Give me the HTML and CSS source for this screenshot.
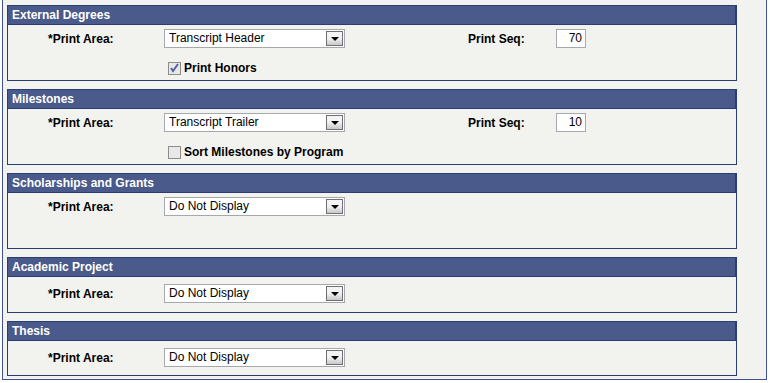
FILE: index.html
```html
<!DOCTYPE html>
<html>
<head>
<meta charset="utf-8">
<link rel="stylesheet" href="styles.css">
</head>
<body>
<div class="page">
  <div class="sec">
    <div class="hdr">External Degrees</div>
    <div class="body b-tall">
      <div class="row">
        <span class="lbl">*Print Area:</span>
        <span class="sel"><span class="sel-text">Transcript Header</span><span class="btn"><span class="tri"></span></span></span>
        <span class="lbl seq-lbl">Print Seq:</span>
        <span class="num">70</span>
      </div>
      <div class="row chk-row">
        <span class="chk checked"><svg width="11" height="11" viewBox="0 0 11 11"><path d="M2 5 L4 8 L9 1" fill="none" stroke="#4f66a6" stroke-width="2"/></svg></span>
        <span class="chk-lbl">Print Honors</span>
      </div>
    </div>
  </div>
  <div class="sec">
    <div class="hdr">Milestones</div>
    <div class="body b-tall">
      <div class="row">
        <span class="lbl">*Print Area:</span>
        <span class="sel"><span class="sel-text">Transcript Trailer</span><span class="btn"><span class="tri"></span></span></span>
        <span class="lbl seq-lbl">Print Seq:</span>
        <span class="num">10</span>
      </div>
      <div class="row chk-row">
        <span class="chk"></span>
        <span class="chk-lbl">Sort Milestones by Program</span>
      </div>
    </div>
  </div>
  <div class="sec">
    <div class="hdr">Scholarships and Grants</div>
    <div class="body b-tall">
      <div class="row">
        <span class="lbl">*Print Area:</span>
        <span class="sel"><span class="sel-text">Do Not Display</span><span class="btn"><span class="tri"></span></span></span>
      </div>
    </div>
  </div>
  <div class="sec">
    <div class="hdr">Academic Project</div>
    <div class="body b-short">
      <div class="row">
        <span class="lbl">*Print Area:</span>
        <span class="sel"><span class="sel-text">Do Not Display</span><span class="btn"><span class="tri"></span></span></span>
      </div>
    </div>
  </div>
  <div class="sec">
    <div class="hdr">Thesis</div>
    <div class="body b-last">
      <div class="row">
        <span class="lbl">*Print Area:</span>
        <span class="sel"><span class="sel-text">Do Not Display</span><span class="btn"><span class="tri"></span></span></span>
      </div>
    </div>
  </div>
</div>
</body>
</html>
```
FILE: styles.css
```css
html, body {
  margin: 0;
  padding: 0;
  background: #ffffff;
}
body {
  font-family: "Liberation Sans", Arial, sans-serif;
  font-size: 12px;
  color: #000;
}
.page {
  box-sizing: border-box;
  margin-left: 2px;
  width: 765px;
  height: 380px;
  background: #f2f3ee;
  border-left: 1px solid #3f5190;
  border-right: 1px solid #3f5190;
  border-bottom: 1px solid #3f5190;
  padding: 5px 0 0 4px;
  display: flex;
  flex-direction: column;
  gap: 8px;
}
.sec {
  box-sizing: border-box;
  width: 730px;
  border: 1px solid #2b3d78;
  background: #f2f3ee;
}
.hdr {
  height: 18px;
  line-height: 18px;
  background: #4a5a8a;
  border-bottom: 1px solid #2b3d78;
  color: #fff;
  font-weight: bold;
  padding-left: 4px;
  margin-top: -1px;
  margin-left: -1px;
  margin-right: -1px;
  border-top: 1px solid #2b3d78;
  border-left: 1px solid #2b3d78;
  border-right: 2px solid #2b3d78;
}
.body {
  box-sizing: border-box;
  padding-top: 4px;
}
.b-tall { height: 55px; }
.b-short { height: 35px; padding-top: 7px; }
.b-last { height: 34px; padding-top: 7px; }
.row {
  display: flex;
  align-items: center;
  height: 19px;
}
.lbl {
  font-weight: bold;
  margin-left: 40px;
  width: 116px;
}
.seq-lbl {
  margin-left: 123px;
  width: 88px;
}
.sel {
  box-sizing: border-box;
  width: 181px;
  height: 19px;
  background: #fff;
  border: 1px solid #a5a9ad;
  display: flex;
  align-items: center;
  justify-content: space-between;
  padding-left: 4px;
  padding-right: 1px;
}
.sel-text {
  line-height: 17px;
}
.btn {
  box-sizing: border-box;
  width: 17px;
  height: 15px;
  border: 1px solid #707070;
  background: linear-gradient(#f4f4f4 0%, #f4f4f4 45%, #c8c8c8 100%);
  display: flex;
  align-items: center;
  justify-content: center;
}
.tri {
  width: 0;
  height: 0;
  border-left: 4px solid transparent;
  border-right: 4px solid transparent;
  border-top: 4px solid #000;
}
.num {
  box-sizing: border-box;
  width: 30px;
  height: 19px;
  line-height: 17px;
  background: #fff;
  border: 1px solid #a5a9ad;
  text-align: right;
  padding-right: 3px;
}
.chk-row {
  margin-top: 13px;
  height: 14px;
}
.chk {
  box-sizing: border-box;
  margin-left: 160px;
  width: 13px;
  height: 13px;
  border: 1px solid #8c8c8c;
  background: #e8e8e8;
  display: flex;
  align-items: center;
  justify-content: center;
}
.chk-lbl {
  font-weight: bold;
  margin-left: 3px;
}
```
